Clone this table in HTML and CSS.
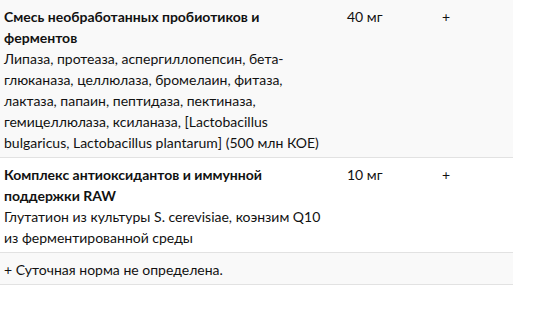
FILE: index.html
```html
<!DOCTYPE html>
<html lang="ru">
<head>
<meta charset="utf-8">
<title>Пищевая ценность</title>
<link rel="stylesheet" href="styles.css">
</head>
<body>
<table class="facts">
  <tbody>
    <tr class="row row-shaded">
      <td class="cell cell-name">
        <div class="name">Смесь необработанных пробиотиков и ферментов</div>
        <div class="desc">Липаза, протеаза, аспергиллопепсин, бета-глюканаза, целлюлаза, бромелаин, фитаза, лактаза, папаин, пептидаза, пектиназа, гемицеллюлаза, ксиланаза, [Lactobacillus bulgaricus, Lactobacillus plantarum] (500 млн КОЕ)</div>
      </td>
      <td class="cell cell-amount">40 мг</td>
      <td class="cell cell-dv">+</td>
    </tr>
    <tr class="row">
      <td class="cell cell-name">
        <div class="name">Комплекс антиоксидантов и иммунной поддержки RAW</div>
        <div class="desc">Глутатион из культуры S. cerevisiae, коэнзим Q10 из ферментированной среды</div>
      </td>
      <td class="cell cell-amount">10 мг</td>
      <td class="cell cell-dv">+</td>
    </tr>
    <tr class="row row-shaded">
      <td class="cell cell-note" colspan="3">+ Суточная норма не определена.</td>
    </tr>
  </tbody>
</table>
</body>
</html>
```
FILE: styles.css
```css
html, body {
  margin: 0;
  padding: 0;
  background: #ffffff;
}

body {
  font-family: Lato, "Liberation Sans", Arial, sans-serif;
  font-size: 14px;
  line-height: 21px;
  color: #111111;
}

.facts {
  width: 513px;
  border-collapse: collapse;
  table-layout: fixed;
}

.row {
  border-bottom: 1px solid #e2e2e2;
}

.row-shaded {
  background: #f9f9f9;
}

.cell {
  padding: 6px 4px 4px 4px;
  vertical-align: top;
  text-align: left;
}

/* name column: 343px including padding */
.cell-name {
  width: 326px;
  padding-right: 13px;
}

.cell-amount {
  width: 87px;
}

.name {
  font-weight: 700;
}
```
